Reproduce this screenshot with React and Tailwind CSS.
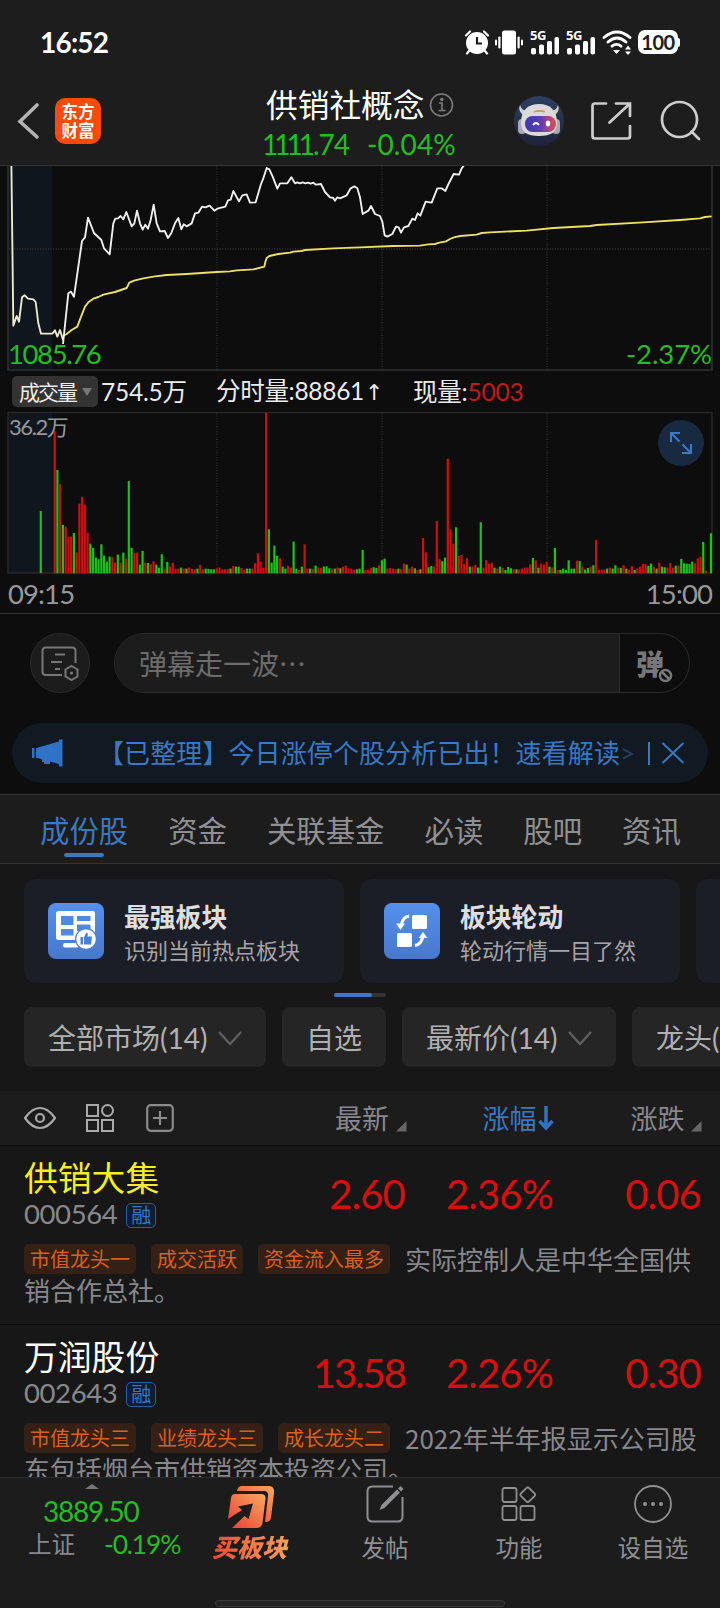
import React from "react";

// Volume bars: colour letter + height, one entry per minute
const volumeSegments = [
  {
    start: 164,
    bars: "r424 g308 r265 g143 r138 r108 r108 g119 r60 r207 r227 r204 r120 g87 g74 g45 g40 g85 g51 g33 g48 r46 r30 g54 r30 g60 r42 g275 g74 r60 r60 g24 g65 r30 g29 r25 r34 g24 g15 g55 r12 g32 r18 r30 r12 r12 g15 r12 g12 r15 r11 r10 g12 r23 r10 g12 g11 g10 g10 r13 r15 r10 r10 r10 g12 r20 g18 g18 r14 r9 g12 g12 r12 r28 r58 r33 r14 r480 g130 g30 g81 g50 r43 g18 g12 r20 r15 g93 g12 r8 g18 r85 r12 g12 r10 g21 r15 r14 g18 g19 g13 r10 g12 r15 g13 r18 r21 r12 r12 r8 g10 g12",
  },
  {
    start: 1088,
    bars: "g68 r8 r9 r14 g16 g14 r22 g37 g42 r12 r14 r12 r10 g12 r10 r27 g24 r12 r18 g13 r8 g10 r104 r61 g16 g20 r18 r155 r41 g34 g45 r342 r130 r87 g136 r50 r53 r26 r43 g18 r18 r23 g15 g151 r15 r38 r26 r30 g15 r12 g18 r14 g8 g17 g13 r10 g10 r9 r12 r15 r15 r25 g44 r37 g15 r27 r24 r32 g18 r15 g74 r8 g8 g12 g8 g37 g12 g12 r36 g35 r18 g9 g14 r18 g22 r98 r9 r9 r9 g12 r15 g12 g22 r14 g14 r22 g12 r9 r19 g8 r13 r18 r27 r25 g20 g27 r17 g12 r30 g18 g16 r15 r29 r15 g21 r21 g41 g28 g27 g26 g33 r28 r43 r48 g92 r6",
  },
  { start: 2133, bars: "g118" },
];

const pricePre = "34,0 40,497 50,468 57,485 66,412 74,406 84,416 100,418 107,426 115,490 123,521 157,521 165,511 172,530 180,510 189,540";
const priceLine =
  "189,552 205,400 213,395 222,410 246,243 255,232 264,173 282,219 304,240 312,265 329,283 340,190 346,176 354,175 362,168 370,178 379,156 395,199 403,190 411,152 420,190 428,209 436,194 444,206 452,180 461,134 470,190 480,214 494,213 504,234 514,219 525,190 535,174 544,208 551,193 560,199 575,190 585,160 595,158 606,140 616,142 629,137 643,152 652,146 676,140 684,121 692,119 700,93 717,124 727,106 740,103 750,128 767,127 783,72 790,55 800,24 808,28 818,50 832,86 840,70 862,70 874,52 885,70 892,67 900,70 908,67 916,70 924,68 932,71 940,68 948,74 963,72 975,96 990,112 1000,114 1005,122 1012,112 1020,115 1040,106 1052,85 1063,79 1072,85 1080,112 1088,162 1105,152 1113,138 1125,162 1140,168 1147,185 1154,226 1162,230 1177,222 1188,200 1196,202 1203,218 1212,202 1225,198 1237,176 1245,180 1253,160 1261,167 1277,125 1295,128 1312,85 1325,85 1336,93 1344,75 1361,42 1377,44 1385,25 1395,12";
const avgLine =
  "189,528 200,522 215,510 232,500 240,478 255,440 266,426 280,416 295,411 310,404 345,396 380,384 388,368 402,362 430,355 465,349 500,345 560,342 650,336 690,334 710,331 760,328 793,320 796,306 800,294 808,288 835,282 870,278 880,275 905,273 915,270 1000,265 1080,262 1180,258 1260,257 1285,253 1305,252 1318,248 1338,244 1350,237 1362,232 1380,228 1430,224 1445,219 1470,217 1580,212 1660,204 1770,198 1790,195 1930,187 2040,180 2100,175 2115,171 2135,169";

const tabs = ["成份股", "资金", "关联基金", "必读", "股吧", "资讯"];

const stocks = [
  {
    name: "供销大集",
    nameColor: "text-[#f9ee1e]",
    code: "000564",
    price: "2.60",
    priceSpacing: "",
    percent: "2.36%",
    change: "0.06",
    tags: ["市值龙头一", "成交活跃", "资金流入最多"],
    desc: "实际控制人是中华全国供销合作总社。",
  },
  {
    name: "万润股份",
    nameColor: "text-white",
    code: "002643",
    price: "13.58",
    priceSpacing: "tracking-[-2px]",
    percent: "2.26%",
    change: "0.30",
    tags: ["市值龙头三", "业绩龙头三", "成长龙头二"],
    desc: "2022年半年报显示公司股东包括烟台市供销资本投资公司。",
  },
];

function Signal() {
  return (
    <div className="relative w-[29px] h-[25px]">
      <span className="absolute left-0 -top-[2px] text-[13px] leading-[14px] tracking-[-0.5px] font-bold font-['Noto_Sans',sans-serif]">5G</span>
      <svg className="absolute inset-0" width="29" height="25" fill="#fff">
        <rect x="1" y="18" width="5" height="6.5" rx="1.8" />
        <rect x="9" y="14.500" width="5" height="10" rx="1.8" />
        <rect x="17" y="11" width="5" height="13.500" rx="1.8" />
        <rect x="24.500" y="7" width="4.500" height="17.500" rx="1.8" />
      </svg>
    </div>
  );
}

function StatusBar() {
  return (
    <div className="flex h-[84px] items-center justify-between pl-[40px] pr-[40px] text-white">
      <span className="font-bold text-[28px] leading-[28px] tracking-[-0.8px]">16:52</span>
      <div className="flex items-center h-[25px]">
        {/* Alarm */}
        <svg width="26" height="25" viewBox="0 0 26 25" fill="none" stroke="#fff" strokeWidth="2.200" strokeLinecap="round">
          <circle cx="13" cy="13" r="11" fill="#fff" stroke="none" />
          <path d="M2 5.500 6 1.500M20 1.500 24 5.500M5 21 3 23.500M21 21 23 23.500" />
          <path d="M13 7v6.500h5" stroke="#1d1d1d" strokeLinecap="butt" />
        </svg>
        {/* Vibrate */}
        <svg className="ml-[5px]" width="28" height="25" fill="#fff">
          <rect x="7" y="0.500" width="14" height="24" rx="2.500" />
          <rect x="3.300" y="6.500" width="2.200" height="12" rx="1" />
          <rect x="0" y="9.500" width="2" height="6" rx="1" />
          <rect x="22.500" y="6.500" width="2.200" height="12" rx="1" />
          <rect x="26" y="9.500" width="2" height="6" rx="1" />
        </svg>
        <div className="ml-[7px]"><Signal /></div>
        <div className="ml-[7px]"><Signal /></div>
        {/* Wifi */}
        <svg className="ml-[7px]" width="30" height="25" viewBox="0 0 30 25" fill="none" stroke="#fff" strokeWidth="2.800" strokeLinecap="round">
          <path d="M2 7.500Q15-3.500 28 7.500M6 12Q15 4 24 12M10 16.200Q14.500 12.500 19 16.200" />
          <path d="M11 20h7l-3.500 4z" fill="#fff" stroke="none" />
          <path d="M23 19.500h6L26 15.500zM23 21.500h6L26 25z" fill="#fff" stroke="none" />
        </svg>
        {/* Battery */}
        <div className="ml-[6px] flex h-[24px] w-[40px] items-center justify-center rounded-[7px] bg-white text-[#1d1d1d] text-[20px] leading-[24px] tracking-[-0.5px] font-bold">100</div>
        <div className="h-[9px] w-[2px] rounded-r bg-white"></div>
      </div>
    </div>
  );
}

function Robot() {
  return (
    <svg width="50" height="50" viewBox="0 0 50 50">
      <defs>
        <linearGradient id="visor" x1="0" x2="1">
          <stop offset="0" stopColor="#3a3aa8" />
          <stop offset="0.500" stopColor="#5c3fb5" />
          <stop offset="0.800" stopColor="#b8457f" />
          <stop offset="1" stopColor="#c95a50" />
        </linearGradient>
        <linearGradient id="ring" x1="0" y1="0" x2="0" y2="1">
          <stop offset="0" stopColor="#2c4060" />
          <stop offset="1" stopColor="#1e2238" />
        </linearGradient>
      </defs>
      <circle cx="25" cy="25" r="25" fill="url(#ring)" />
      <path d="M6 9q-3 7 5 11l5-5Q8 16 6 9ZM44 9q3 7-5 11l-5-5q8 1 10-6Z" fill="#cfcfd2" />
      <rect x="4" y="23" width="8" height="15" rx="4" fill="#a9a9b5" />
      <rect x="38" y="23" width="8" height="15" rx="4" fill="#a9a9b5" />
      <path d="M7 27C7 14 14 8 25 8s18 6 18 19c0 9-6 13-18 13S7 36 7 27Z" fill="#dcdad8" />
      <path d="M20 15q6-2 11 0v1.500q-5-1.500-11 0Z" fill="#c99567" />
      <rect x="11" y="20" width="31" height="16" rx="7.500" fill="url(#visor)" />
      <path d="M19 29q3-4 6 0" stroke="#fff" strokeWidth="1.800" fill="none" />
      <ellipse cx="34" cy="27.500" rx="2.200" ry="3" fill="#fff" />
    </svg>
  );
}

function Header() {
  return (
    <div className="flex h-[81px] items-start">
      <svg className="ml-[16px] mt-[17px]" width="26" height="40" fill="none" stroke="#b4b4b4" strokeWidth="3.600" strokeLinecap="round">
        <path d="M21 4 4 20.500 21 36" />
      </svg>
      <div className="ml-[13px] mt-[14px] flex h-[46px] w-[46px] flex-col items-center justify-center rounded-[10px] bg-[#ff4906] text-[16.5px] leading-[19px] font-bold text-white font-['Noto_Sans_CJK_SC',sans-serif]">
        <span>东方</span>
        <span>财富</span>
      </div>
      <div className="ml-[162px] w-[208px]">
        <div className="flex h-[41px] items-center text-white">
          <span className="ml-[3px] text-[31.7px] leading-[40px]">供销社概念</span>
          <svg className="ml-[5px]" width="26" height="26" fill="none" stroke="#7c7c7c" strokeWidth="1.600">
            <circle cx="12.500" cy="13" r="11" />
            <path d="M10 11h3v7.500M9.500 18.500h7" />
            <circle cx="12.800" cy="7.500" r="1" fill="#7c7c7c" />
          </svg>
        </div>
        <div className="flex h-[38px] items-center text-[28px] leading-[38px] text-[#22bd22]">
          <span className="-ml-[1px] w-[105px] tracking-[-1px]">
            <span className="tracking-[-4px]">111</span>
            <span className="tracking-[-2px]">1</span>.74
          </span>
          <span className="whitespace-nowrap tracking-[0.1px]">-0.04%</span>
        </div>
      </div>
      <div className="ml-[43px] mt-[12px]"><Robot /></div>
      <svg className="ml-[26px] mt-[16px]" width="42" height="42" fill="none" stroke="#cdcdcd" strokeWidth="2.700" strokeLinecap="round">
        <path d="M16 3.500H5q-2.500 0-2.500 2.500V36q0 2.500 2.500 2.500H37.500q2.500 0 2.500-2.500V26M26 3.500H40V16M40 3.500 19.500 22.500" />
      </svg>
      <svg className="ml-[28px] mt-[16px]" width="42" height="42" fill="none" stroke="#cdcdcd" strokeWidth="2.700" strokeLinecap="round">
        <circle cx="19.500" cy="19.500" r="17.500" />
        <path d="M31.500 31.500 39 39" />
      </svg>
    </div>
  );
}

function PriceChart() {
  return (
    <div className="relative h-[205px]">
      <svg width="720" height="205" fill="none">
        <rect x="9" y="0" width="43" height="204" fill="#10161e" />
        <path d="M217 0V204M382 0V204M547 0V204M9 83H711" stroke="#333" strokeWidth="1.300" strokeDasharray="1 1.600" />
        <path d="M8 0V204H712V0" stroke="#2f3032" strokeWidth="1.600" />
        <g transform="translate(0 -6) scale(0.33333)" strokeWidth="5.600" strokeLinejoin="round">
          <polyline points={avgLine} stroke="#efe062" />
          <polyline points={pricePre} stroke="#ecead2" />
          <polyline points={priceLine} stroke="#f0f0f0" />
        </g>
      </svg>
      <span className="absolute left-[8px] bottom-[1px] text-[27.500px] leading-[32px] tracking-[-1.4px] text-[#22bd22]">1085.76</span>
      <span className="absolute right-[8px] bottom-[1px] text-[27.500px] leading-[32px] tracking-[-0.1px] text-[#22bd22]">-2.37%</span>
    </div>
  );
}

function VolumeChart() {
  return (
    <div className="relative h-[162px]">
      <svg width="720" height="162" fill="none">
        <rect x="9" y="1" width="43" height="160" fill="#10161e" />
        <path d="M217 1V161M382 1V161M547 1V161" stroke="#333" strokeWidth="1.300" strokeDasharray="1 1.600" />
        <rect x="8" y="0.500" width="704" height="160.500" stroke="#2a2b2d" strokeWidth="1.300" />
        <rect x="39.700" y="99" width="2.200" height="62" fill="#18c418" />
        {volumeSegments.map((seg) =>
          seg.bars.split(" ").map((bar, i) => {
            const h = Number(bar.slice(1)) / 3 + 0.7;
            return (
              <rect
                key={`${seg.start}-${i}`}
                x={(seg.start + i * 8.24) / 3 - 1.1}
                y={161.3 - h}
                width="2.200"
                height={h}
                fill={bar[0] === "r" ? "#cf0f0f" : "#18c418"}
              />
            );
          })
        )}
      </svg>
      <span className="absolute left-[9px] top-[1px] text-[22px] leading-[28px] tracking-[-1.4px] text-[#989898]">36.2万</span>
      <div className="absolute right-[16px] top-[8px] flex h-[46px] w-[46px] items-center justify-center rounded-full bg-[#182a42]">
        <svg width="24" height="24" fill="none" stroke="#3b79c4" strokeWidth="2">
          <path d="M2 11V2h9M2 2l8.500 8.500M22 13v9h-9M22 22l-8.500-8.500" />
        </svg>
      </div>
    </div>
  );
}

function Danmu() {
  return (
    <div className="flex h-[109px] items-start pl-[30px] pt-[19px]">
      <div className="flex h-[60px] w-[60px] items-center justify-center rounded-full border border-[#2b2b2b] bg-[#1c1c1c]">
        <svg width="38" height="36" fill="none" stroke="#777" strokeWidth="2">
          <path d="M21 30H5q-3.500 0-3.500-3.500V6q0-3.500 3.500-3.500H31q3.500 0 3.500 3.500V18M14 9.500H24M10 17H21M14 24h5" />
          <path d="M30.500 21 36.500 24.500v7L30.500 35l-6-3.500v-7z" />
          <circle cx="30.500" cy="28" r="1.600" fill="#777" stroke="none" />
        </svg>
      </div>
      <div className="ml-[24px] flex h-[60px] w-[576px] overflow-hidden rounded-full border border-[#2b2b2b]">
        <div className="flex w-[505px] items-center border-r border-[#2b2b2b] bg-[#1c1c1c] pl-[24px] text-[28px] text-[#6c6c6c] font-['Noto_Sans_CJK_SC',sans-serif]">
          弹幕走一波<span className="ml-[1px] font-['Lato',sans-serif] text-[25px] tracking-[2.6px]">···</span>
        </div>
        <div className="relative flex flex-1 items-center pl-[16px] text-[28px] font-black text-[#777] font-['Noto_Sans_CJK_SC',sans-serif]">
          弹
          <svg className="absolute left-[37px] top-[33px]" width="17" height="17">
            <circle cx="8.500" cy="8.500" r="8.500" fill="#0d0d0d" />
            <circle cx="8.500" cy="8.500" r="5.600" fill="none" stroke="#777" strokeWidth="2.500" />
            <path d="m5 5 7 7" stroke="#777" strokeWidth="2.500" />
          </svg>
        </div>
      </div>
    </div>
  );
}

function Notice() {
  return (
    <div className="mx-[12px] mb-[11px] flex h-[60px] items-center rounded-full bg-[#111922] text-[#3a78c2]">
      <svg className="ml-[20px]" width="32" height="28" fill="#3072c6">
        <path d="M0 9h2.500v10H0zM4 9h2v10H4zM6 8.500 27 2.500V0.500h3.500v27H27v-2.500l-9-2.500V25h-6v-2h-2v-2.500L6 19z" />
      </svg>
      <span className="ml-[34px] pb-[3px] whitespace-nowrap text-[26px] tracking-[0.1px] font-['Noto_Sans_CJK_SC',sans-serif]">【已整理】今日涨停个股分析已出！速看解读</span>
      <span className="text-[26px] text-[#243f60]">&gt;</span>
      <div className="ml-[13px] h-[23px] w-[1.500px] bg-[#3a78c2]"></div>
      <svg className="ml-[11px]" width="24" height="24" stroke="#3a78c2" strokeWidth="2">
        <path d="M1.500 2 22.500 22M22.500 2 1.500 22" />
      </svg>
    </div>
  );
}

function FeatureCard({ title, sub, children }) {
  return (
    <div className="flex h-[104px] w-[320px] shrink-0 items-center rounded-[12px] bg-[#1b1e26] pl-[24px]">
      <div className="flex h-[56px] w-[56px] items-center justify-center rounded-[8px] bg-linear-to-b from-[#5490ee] to-[#4878cc]">{children}</div>
      <div className="ml-[20px] pt-[1px] font-['Noto_Sans_CJK_SC',sans-serif]">
        <div className="text-[25.800px] leading-[34px] font-bold text-[#dedede]">{title}</div>
        <div className="text-[22px] leading-[32px] text-[#a5a5a8]">{sub}</div>
      </div>
    </div>
  );
}

function Filter({ label, arrow }) {
  return (
    <div className="flex h-[60px] shrink-0 items-center rounded-[8px] bg-[#252525] px-[24px] pt-[1px] text-[28px] text-[#b0b0b0]">
      <span className="whitespace-nowrap">{label}</span>
      {arrow && (
        <svg className="ml-[10.500px]" width="24" height="16" fill="none" stroke="#606060" strokeWidth="2.200">
          <path d="M1 2 12 14 23 2" />
        </svg>
      )}
    </div>
  );
}

function Corner() {
  return (
    <svg className="mb-[-5px] ml-[6.500px] self-center" width="11" height="30" fill="#666">
      <path d="M10.500 15v10.500H0z" />
    </svg>
  );
}

function StockRow({ stock }) {
  return (
    <div className="h-[179px] shrink-0 border-b border-[#0c0c0c] pl-[24px]">
      <div className="flex h-[98px] items-start">
        <div className="w-[200px] pt-[9px]">
          <div className={`text-[33.800px] leading-[46px] ${stock.nameColor}`}>{stock.name}</div>
          <div className="flex h-[26px] items-center text-[27.500px] leading-[26px] tracking-[-0.4px] text-[#88888c]">
            {stock.code}
            <span className="ml-[9px] mt-[2px] flex h-[25px] w-[30px] items-center justify-center rounded-[5px] border border-[#2c5f9c] bg-[#101d2c] text-[20px] tracking-normal text-[#3a78c2]">融</span>
          </div>
        </div>
        <div className="flex pt-[20px] text-right text-[40px] leading-[56px] tracking-[-0.8px] text-[#d80f0f]">
          <span className={`w-[181px] ${stock.priceSpacing}`}>{stock.price}</span>
          <span className="w-[148px]">{stock.percent}</span>
          <span className="w-[148px]">{stock.change}</span>
        </div>
      </div>
      <p className="w-[688px] text-[26px] leading-[30.5px] text-[#88888c] font-['Noto_Sans_CJK_SC',sans-serif]">
        {stock.tags.map((tag) => (
          <span key={tag} className="mr-[15px] inline-block h-[30px] rounded-[5px] bg-[#352015] px-[6px] align-top text-[20px] leading-[30px] text-[#d9601f]">
            {tag}
          </span>
        ))}
        {stock.desc}
      </p>
    </div>
  );
}

function NavItem({ label, children }) {
  return (
    <div className="flex w-[134px] flex-col items-center">
      <div className="flex h-[52px] items-center justify-center">{children}</div>
      <span className="pt-[1px] text-[23.500px] leading-[34px] text-[#909093]">{label}</span>
    </div>
  );
}

function BottomNav() {
  return (
    <div className="h-[131px] shrink-0 border-t border-[#2b2b2b] bg-[#1c1c1c]">
      <div className="flex h-[122px]">
        <div className="w-[184px] pt-[6px]">
          <svg className="ml-[85px]" width="14" height="5" fill="#777">
            <path d="M0 5 7 0l7 5z" />
          </svg>
          <div className="pl-[43px] pt-[5px] text-[28px] leading-[34px] tracking-[-1.2px] text-[#22bd22]">3889.50</div>
          <div className="flex pl-[28px] leading-[33px]">
            <span className="w-[76px] text-[23.500px] text-[#88888c]">上证</span>
            <span className="text-[26.500px] tracking-[-1.2px] text-[#22bd22]">-0.19%</span>
          </div>
        </div>
        <div className="flex w-[134px] flex-col items-center">
          <div className="flex h-[54px] items-end pb-[3px]">
            <svg width="48" height="44" viewBox="0 0 48 44">
              <defs>
                <linearGradient id="buy" x1="0" y1="1" x2="1" y2="0">
                  <stop offset="0" stopColor="#ee3d30" />
                  <stop offset="1" stopColor="#f8a862" />
                </linearGradient>
              </defs>
              <path d="M15 1h26q7 0 6 7l-3 25q-.6 4-6 4l3-26q.5-5-4-5H10q1-5 5-5Z" fill="url(#buy)" />
              <path d="M8 9h26q5 0 4.500 5l-3 24q-.8 5-6 5H5l12.500-12 4 3L26 18.500l-15 3 4 3.500L1 34 4 13q.6-4 4-4Z" fill="url(#buy)" />
            </svg>
          </div>
          <span className="-ml-[3px] bg-linear-to-r from-[#ee4030] to-[#f5a060] bg-clip-text px-1 text-[25px] leading-[30px] font-black italic text-transparent">买板块</span>
        </div>
        <NavItem label="发帖">
          <svg width="38" height="38" fill="none" stroke="#909093" strokeWidth="2">
            <path d="M27 1.500H6.500q-5 0-5 5v25q0 5 5 5h25q5 0 5-5V12" />
            <path d="m13.500 25 2-5L31 4.500l3 3L18.500 23z" fill="#909093" stroke="none" />
            <path d="m32 3.500 2.500-2.500 3 3L35 6.500z" fill="#909093" stroke="none" />
          </svg>
        </NavItem>
        <NavItem label="功能">
          <svg width="36" height="36" fill="none" stroke="#909093" strokeWidth="1.800">
            <rect x="1.500" y="2" width="14" height="14" rx="2" />
            <rect x="1.500" y="20" width="14" height="14" rx="2" />
            <rect x="19.500" y="20" width="14" height="14" rx="2" />
            <rect x="21" y="3" width="11.500" height="11.500" rx="2" transform="rotate(45 26.750 8.750)" />
          </svg>
        </NavItem>
        <NavItem label="设自选">
          <svg width="38" height="38" fill="none" stroke="#909093" strokeWidth="1.800">
            <circle cx="19" cy="19" r="18" />
            <g fill="#909093" stroke="none">
              <circle cx="11" cy="19" r="2" />
              <circle cx="19" cy="19" r="2" />
              <circle cx="27" cy="19" r="2" />
            </g>
          </svg>
        </NavItem>
      </div>
      <div className="mx-auto h-[7px] w-[290px] rounded-full border border-[#393939] bg-[#242424]"></div>
    </div>
  );
}

export default function App() {
  return (
    <div className="flex h-[1608px] w-[720px] flex-col overflow-hidden bg-[#171717] font-['Lato','Noto_Sans_CJK_SC',sans-serif]">
      <div className="h-[166px] shrink-0 border-b border-[#333] bg-[#1d1d1d]">
        <StatusBar />
        <Header />
      </div>

      {/* Charts */}
      <div className="shrink-0 bg-[#0d0d0d]">
        <PriceChart />
        <div className="flex h-[41px] items-center pl-[12px] text-[24.500px] leading-[32px] text-[#ececec]">
          <div className="flex h-[31px] w-[86px] shrink-0 items-center whitespace-nowrap rounded-[5px] bg-[#333] pl-[7px]">
            <span className="w-[57px] text-[21px] tracking-[-2px]">成交量</span>
            <svg className="ml-[6px]" width="10" height="8" fill="#777">
              <path d="M0 0h10L5 8z" />
            </svg>
          </div>
          <span className="ml-[3px] w-[115px] tracking-[-0.2px]">754.5万</span>
          <span className="w-[197px] whitespace-nowrap tracking-[-0.3px]">分时量:88861<span className="ml-[1px] font-['DejaVu_Sans',sans-serif] text-[22px]">↑</span></span>
          <span className="tracking-[-0.2px]">现量:<span className="text-[#c41a1a]">5003</span></span>
        </div>
        <VolumeChart />
        <div className="flex h-[40px] items-center justify-between border-b border-[#333] px-[8px] text-[27.500px] leading-[38px] tracking-[-0.9px] text-[#989898]">
          <span>09:15</span>
          <span>15:00</span>
        </div>
        <Danmu />
        <Notice />
      </div>

      {/* Tabs */}
      <div className="flex h-[70px] shrink-0 gap-[40px] border-y border-[#333] bg-[#1c1c1c] pl-[40px] text-[29.400px] text-[#909093]">
        {tabs.map((tab, i) => (
          <div key={tab} className={`flex flex-col items-center pt-[13px] leading-[45px] ${i === 0 ? "text-[#3a78c2]" : ""}`}>
            {tab}
            {i === 0 && <div className="h-[4px] w-[40px] rounded-full bg-[#3a78c2]"></div>}
          </div>
        ))}
      </div>

      {/* Feature cards */}
      <div className="flex shrink-0 gap-[16px] pl-[24px] pt-[15px]">
        <FeatureCard title="最强板块" sub="识别当前热点板块">
          <svg width="42" height="40">
            <rect x="1" y="0" width="39" height="29" rx="2.500" fill="#fff" />
            <path d="M6 5h12.500v9H6zM6 18h12.500v6.500H6zM22 5h13.500v5H22zM22 13.500h13.500V20H22z" fill="#5088e2" />
            <rect x="8" y="32" width="16" height="4.500" rx="2" fill="#fff" />
            <circle cx="31" cy="28" r="11" fill="#4c80d8" />
            <circle cx="31" cy="28" r="9.800" fill="#fff" />
            <path d="M25.500 26h2.500v7.500h-2.500zM29 26l2.500-4.500q2 .5 1 4h4.500l-1 8H29z" fill="#4c80d8" />
          </svg>
        </FeatureCard>
        <FeatureCard title="板块轮动" sub="轮动行情一目了然">
          <svg width="32" height="34" fill="#fff">
            <rect x="16" y="1" width="15" height="14" rx="1.500" />
            <rect x="1" y="19" width="15" height="14" rx="1.500" />
            <path d="M13 2Q7 3 5.500 10M19 31.500q6-1 7.500-8" fill="none" stroke="#fff" strokeWidth="3.200" />
            <path d="M0 9.500h9L4.500 16zM22.500 24h9L27 18z" />
          </svg>
        </FeatureCard>
        <div className="h-[104px] w-[320px] shrink-0 rounded-[12px] bg-[#1b1e26]"></div>
      </div>
      <div className="mt-[10px] mb-[10px] h-[4px] w-[52px] shrink-0 self-center rounded-full bg-[#333]">
        <div className="h-[4px] w-[38px] rounded-full bg-[#3a78c2]"></div>
      </div>

      {/* Filters */}
      <div className="mb-[24px] flex shrink-0 gap-[16px] pl-[24px]">
        <Filter label="全部市场(14)" arrow />
        <Filter label="自选" />
        <Filter label="最新价(14)" arrow />
        <Filter label="龙头(14)" arrow />
      </div>

      {/* Table header */}
      <div className="flex h-[55px] shrink-0 items-center border-b border-[#0c0c0c] bg-[#1c1c1c] pl-[24px] text-[27px] text-[#88888c]">
        <svg width="32" height="24" fill="none" stroke="#aaa" strokeWidth="2.200">
          <path d="M1 12Q8 2 16 2t15 10q-7 10-15 10T1 12Z" />
          <circle cx="16" cy="12" r="4" />
        </svg>
        <svg className="ml-[30px]" width="28" height="28" fill="none" stroke="#aaa" strokeWidth="2">
          <path d="M1 1h11v11H1zM1 16h11v11H1zM16 16h11v11H16z" />
          <circle cx="21.500" cy="6.500" r="5.500" />
        </svg>
        <svg className="ml-[32px]" width="28" height="28" fill="none" stroke="#8a8a8a" strokeWidth="2.200">
          <rect x="1.200" y="1.200" width="25.600" height="25.600" rx="3.500" />
          <path d="M14 7v14M7 14h14" />
        </svg>
        <span className="ml-[161px] pt-[2px]">最新</span>
        <Corner />
        <span className="ml-[76px] pt-[2px] text-[#3a78c2]">涨幅</span>
        <svg className="ml-[1px]" width="16" height="26" fill="none" stroke="#3072c6" strokeWidth="3.500">
          <path d="M8 1V22M1.500 16 8 23l6.500-7" />
        </svg>
        <span className="ml-[77px] pt-[2px]">涨跌</span>
        <Corner />
      </div>

      {/* Stock list */}
      <div className="flex min-h-0 flex-1 flex-col overflow-hidden">
        {stocks.map((stock) => (
          <StockRow key={stock.code} stock={stock} />
        ))}
      </div>

      <BottomNav />
    </div>
  );
}
